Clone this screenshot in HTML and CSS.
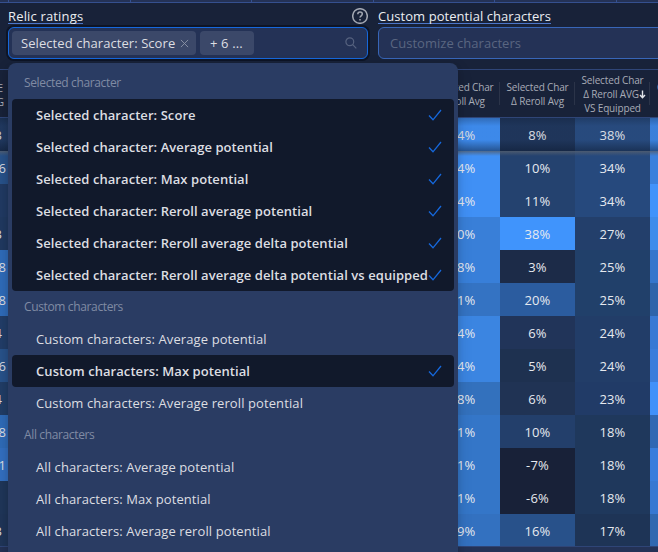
FILE: index.html
```html
<!DOCTYPE html>
<html lang="en">
<head>
<meta charset="utf-8">
<title>Relics</title>
<link rel="stylesheet" href="styles.css">
</head>
<body>
<div class="page">
  <div class="filter-strip"><i></i><i></i><i></i><i></i><i></i><i></i></div>
  <div class="toolbar">
    <div class="field field-ratings">
      <div class="label-row"><span class="label label-a">Relic ratings</span>
        <svg class="help" viewBox="0 0 16 16"><circle cx="8" cy="8" r="7.3"/><path d="M5.8 6.2c0-3 4.5-2.8 4.5-.2 0 1.800-2.300 1.800-2.300 3.600"/><path d="M8 10.900v1.500"/></svg>
      </div>
      <div class="select select-active">
        <span class="tag tag-main">Selected character: Score<svg viewBox="0 0 10 10"><path d="M1 1l8 8M9 1L1 9"/></svg></span>
        <span class="tag tag-more">+ 6 ...</span>
        <svg class="search" viewBox="0 0 12 12"><circle cx="4.800" cy="4.800" r="3.900"/><path d="M7.700 7.700l3.600 3.600"/></svg>
      </div>
      <div class="dropdown">
        <div class="group">Selected character</div>
        <div class="option on first"><span>Selected character: Score</span><svg viewBox="0 0 14 14"><path d="M1 7.500l4 4.300L13 2"/></svg></div>
        <div class="option on"><span>Selected character: Average potential</span><svg viewBox="0 0 14 14"><path d="M1 7.500l4 4.300L13 2"/></svg></div>
        <div class="option on"><span>Selected character: Max potential</span><svg viewBox="0 0 14 14"><path d="M1 7.500l4 4.300L13 2"/></svg></div>
        <div class="option on"><span>Selected character: Reroll average potential</span><svg viewBox="0 0 14 14"><path d="M1 7.500l4 4.300L13 2"/></svg></div>
        <div class="option on"><span>Selected character: Reroll average delta potential</span><svg viewBox="0 0 14 14"><path d="M1 7.500l4 4.300L13 2"/></svg></div>
        <div class="option on last"><span>Selected character: Reroll average delta potential vs equipped</span><svg viewBox="0 0 14 14"><path d="M1 7.500l4 4.300L13 2"/></svg></div>
        <div class="group">Custom characters</div>
        <div class="option"><span>Custom characters: Average potential</span></div>
        <div class="option on first last"><span>Custom characters: Max potential</span><svg viewBox="0 0 14 14"><path d="M1 7.500l4 4.300L13 2"/></svg></div>
        <div class="option"><span>Custom characters: Average reroll potential</span></div>
        <div class="group">All characters</div>
        <div class="option"><span>All characters: Average potential</span></div>
        <div class="option"><span>All characters: Max potential</span></div>
        <div class="option"><span>All characters: Average reroll potential</span></div>
      </div>
    </div>
    <div class="field field-custom">
      <div class="label-row"><span class="label label-b">Custom potential characters</span></div>
      <div class="select"><span class="placeholder">Customize characters</span></div>
    </div>
  </div>
  <div class="grid">
    <div class="row head">
      <div class="edge"><span>E<br>G</span></div><div class="under"></div>
      <div class="th"><span>Selected Char<br>Reroll Avg</span></div>
      <div class="th"><span>Selected Char<br>Δ Reroll Avg</span></div>
      <div class="th sorted"><span>Selected Char<br><b>Δ Reroll AVG<svg viewBox="0 0 7 9"><path d="M3.500 0.500v7M1 5l2.500 2.800L6 5"/></svg></b><br>VS Equipped</span></div>
      <div class="th next"><span>C<br>&nbsp;</span></div>
    </div>
    <div class="body" id="rows"></div>
  </div>
  <div class="footer"></div>
</div>
<script src="rows.js"></script>
</body>
</html>
```
FILE: rows.js
```js
// left value, left value is cut, left colour, then value/colour pairs, then the next column's colour
const rows = [
  ["3", 1, "#223b63", "54%", "#4090f5", "8%", "#20375d", "38%", "#294d82", "#3d86e5"],
  ["6", 0, "#28528a", "54%", "#4090f5", "10%", "#24426f", "34%", "#26497d", "#3a80dc"],
  ["", 0, "#213a63", "54%", "#4090f5", "11%", "#24426f", "34%", "#26497d", "#4193fb"],
  ["3", 1, "#203960", "50%", "#397fd8", "38%", "#4094fc", "27%", "#233f6b", "#3f8ceb"],
  ["8", 0, "#2f6bb9", "48%", "#387fd9", "3%", "#1c2b48", "25%", "#21406a", "#3576cc"],
  ["8", 0, "#2f6bb9", "41%", "#3473c3", "20%", "#2b5c9f", "25%", "#21406a", "#2e64aa"],
  ["4", 1, "#223d68", "54%", "#3b85e1", "6%", "#213459", "24%", "#223d68", "#3879d4"],
  ["6", 0, "#28528a", "54%", "#3b85e1", "5%", "#1e3150", "24%", "#223d68", "#3b7ddb"],
  ["4", 1, "#213d66", "38%", "#3371bd", "6%", "#203354", "23%", "#213b67", "#4191fa"],
  ["8", 0, "#2f6bb8", "41%", "#3476c8", "10%", "#233f6b", "18%", "#1f385c", "#3068b3"],
  ["1", 0, "#336fc0", "41%", "#3476c8", "-7%", "#182138", "18%", "#1f385c", "#387ddc"],
  ["", 0, "#1f3659", "41%", "#3476c8", "-6%", "#182138", "18%", "#1f385c", "#3778d2"],
  ["3", 1, "#1f3558", "39%", "#3371c0", "16%", "#28518a", "17%", "#1e3456", "#3068b0"]
];
const cell = (t, c, k = "td") => `<div class="${k}" style="background:${c}"><span>${t}</span></div>`;
document.getElementById("rows").innerHTML = rows.map(r =>
  `<div class="row">${cell(r[0], r[2], r[1] ? "edge cut" : "edge")}<div class="under"></div>` +
  cell(r[3], r[4]) + cell(r[5], r[6]) + cell(r[7], r[8]) + cell("", r[9], "td next") + `</div>`).join("");
```
FILE: styles.css
```css
* { box-sizing: border-box; }
body { margin: 0; width: 658px; height: 552px; overflow: hidden; background: #182239; color: #dddee2; font-family: "Open Sans", "Noto Sans", sans-serif; font-size: 13px; }
svg { fill: none; display: block; flex: none; }
.page { width: 658px; height: 552px; overflow: hidden; }
.filter-strip { height: 3px; display: flex; background: #243256; border-bottom: 1px solid #35508f; padding-left: 8px; }
.filter-strip i { flex: 0 0 121.6px; border-left: 1px solid #35508f; }
.toolbar { display: flex; gap: 10px; padding-left: 8px; height: 66px; }
.field { position: relative; }
.field-ratings { flex: 0 0 360px; }
.field-custom { flex: 0 0 360px; }
.label-row { height: 24px; display: flex; justify-content: space-between; align-items: flex-start; padding-top: 5px; }
.label { height: 16px; line-height: 16px; border-bottom: 1px solid #4c76c9; white-space: nowrap; color: #eceef2; }
.label-a { letter-spacing: .16px; }
.label-b { letter-spacing: .06px; }
.help { width: 16px; height: 16px; stroke: #a2a7b2; stroke-width: 1.5; }
.select { height: 32px; border: 1px solid #3866b8; border-radius: 6px; background: #243256; display: flex; align-items: center; }
.select-active { border-color: #1668dc; box-shadow: 0 0 0 2px #0e1526; padding-left: 3px; gap: 4px; }
.tag { height: 24px; border-radius: 4px; background: #3b4869; display: flex; align-items: center; padding: 0 8px; white-space: nowrap; }
.tag-main { width: 184px; justify-content: space-between; letter-spacing: .07px; padding: 0 7px 0 9px; }
.tag-main svg { width: 9px; height: 9px; stroke: #8d95a8; stroke-width: 1; }
.tag-more { width: 54px; padding-left: 10px; letter-spacing: .15px; }
.search { width: 12px; height: 12px; stroke: #56627f; stroke-width: 1.2; margin-left: auto; margin-right: 10px; }
.placeholder { padding-left: 11px; color: #5a6681; letter-spacing: .02px; }
.dropdown { position: absolute; z-index: 2; left: 0; top: 60px; width: 450px; height: 500px; padding: 4px; background: #2a3c63; border-radius: 8px; box-shadow: 0 6px 16px rgba(0,0,0,.14), 0 3px 6px rgba(0,0,0,.12); }
.group { height: 32px; line-height: 31px; padding-left: 12px; font-size: 12px; color: #808ba3; letter-spacing: -.36px; }
.option { height: 32px; display: flex; align-items: center; padding: 0 12px 0 24px; white-space: nowrap; justify-content: space-between; letter-spacing: .1px; }
.option span { width: 392px; flex: none; }
.option svg { width: 14px; height: 14px; stroke: #1668dc; stroke-width: 1.3; }
.option.on { background: #11192b; font-weight: 600; letter-spacing: .065px; }
.option.first { border-top-left-radius: 4px; border-top-right-radius: 4px; }
.option.last { border-bottom-left-radius: 4px; border-bottom-right-radius: 4px; }
.grid { border-top: 1px solid #2f4577; border-bottom: 1px solid #2f4577; height: 478px; overflow: hidden; }
.row { display: flex; height: 33px; width: 725px; }
.edge { flex: 0 0 8px; display: flex; justify-content: flex-end; align-items: center; padding-right: 2px; overflow: hidden; }
.edge.cut { padding-right: 6px; }
.under { flex: 0 0 417px; background: #233f6b; }
.td, .th { flex: 0 0 75px; display: flex; align-items: center; justify-content: center; }
.td { letter-spacing: .15px; color: #e6e9ef; }
.head { height: 48px; border-bottom: 1px solid #2f4577; font-size: 10px; line-height: 14px; color: #a8acb7; text-align: center; }
.head .under { background: none; }
.head .edge { padding: 2px 4px 0 0; }
.th { position: relative; white-space: nowrap; letter-spacing: -.15px; padding-top: 1px; }
.th::after { content: ""; position: absolute; right: 0; top: 12px; height: 23px; width: 1px; background: #2b3449; }
.th b { font-weight: 400; padding-left: 4px; }
.th svg { display: inline-block; width: 7px; height: 9px; stroke: #e2e5ea; stroke-width: 1.4; vertical-align: -1px; }
.next { justify-content: flex-start; }
.next span { padding-left: 7px; }
.body .row:first-child { position: relative; }
.body .row:first-child::after { content: ""; position: absolute; inset: 0; background: linear-gradient(rgba(12,24,45,.3), rgba(12,24,45,.06) 8px, rgba(12,24,45,.06) 22px, rgba(12,24,45,.5)); }
.body .row:nth-child(2) { position: relative; }
.body .row:nth-child(2)::before { content: ""; position: absolute; left: 0; right: 0; top: 0; height: 5px; background: linear-gradient(rgba(85,95,110,.8), rgba(85,95,110,0)); }
.footer { height: 5px; background: #243256; }
```
